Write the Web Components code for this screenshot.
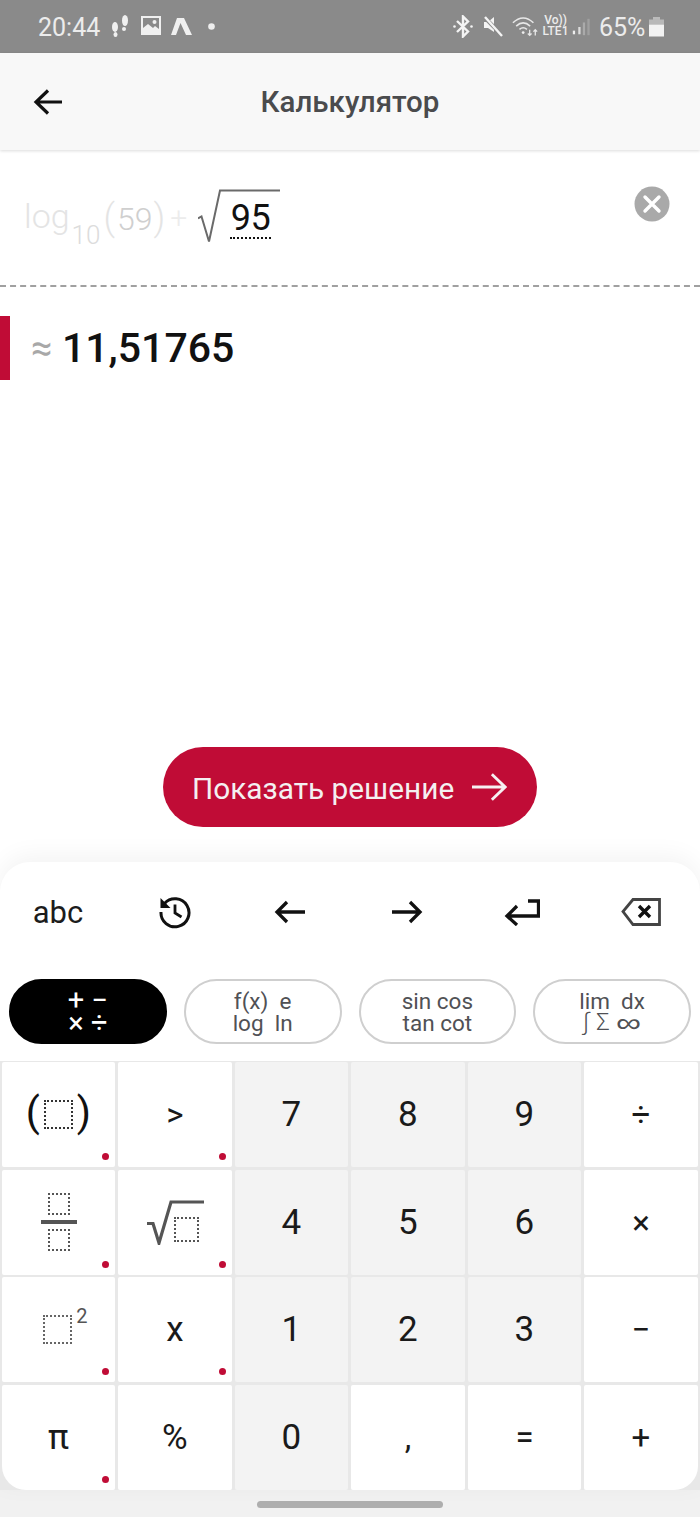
<!DOCTYPE html>
<html lang="ru"><head><meta charset="utf-8"><title>Калькулятор</title>
<style>
html,body{margin:0;padding:0;height:100%}
body{width:700px;height:1517px;overflow:hidden;display:flex;flex-direction:column;font-family:Roboto,"Liberation Sans",sans-serif;background:#fff;color:#111}
</style></head><body>

<status-bar></status-bar>
<app-header>Калькулятор</app-header>
<math-input></math-input>
<result-row>11,51765</result-row>
<solve-button>Показать решение</solve-button>
<math-keyboard>
  <tool-row slot="tools"></tool-row>
  <chip-row slot="chips">
    <calc-chip active><span>+ −</span><span>× ÷</span></calc-chip>
    <calc-chip><span>f(x)&nbsp; e</span><span>log&nbsp; ln</span></calc-chip>
    <calc-chip><span>sin cos</span><span>tan cot</span></calc-chip>
    <calc-chip><span>lim&nbsp; dx</span><span style="font-size:24px;line-height:21px;display:flex;align-items:center;gap:7px;height:21px"><span style="font-weight:300">∫</span><span style="font-weight:300">Σ</span><span style="font-family:'DejaVu Sans',sans-serif;font-size:27px;font-weight:200;margin:0 3px 0 2px;display:inline-block;transform:scaleX(1.3)">∞</span></span></calc-chip>
  </chip-row>
  <key-grid slot="keys">
    <calc-key dot><span style="display:inline-flex;align-items:center;gap:4px;font-size:41px;font-weight:400;color:#111"><span style="position:relative;top:-2px">(</span><dotted-box size="29" c="#333"></dotted-box><span style="position:relative;top:-2px">)</span></span></calc-key>
    <calc-key dot small>&gt;</calc-key>
    <calc-key tint>7</calc-key><calc-key tint>8</calc-key><calc-key tint>9</calc-key>
    <calc-key small>÷</calc-key>

    <calc-key dot><span style="display:inline-flex;flex-direction:column;align-items:center;gap:5px;margin-left:1px"><dotted-box size="22" c="#555"></dotted-box><span style="width:36px;height:3.500px;background:#555"></span><dotted-box size="22" c="#555"></dotted-box></span></calc-key>
    <calc-key dot><span style="display:inline-flex;align-items:flex-end;margin-right:5px"><svg width="58" height="46" viewBox="0 0 58 46" style="margin-right:-30px"><path d="M1 24.500H7L13 44L25 3H58" fill="none" stroke="#555" stroke-width="3.200"/></svg><dotted-box size="25" c="#555" style="margin-bottom:3px"></dotted-box></span></calc-key>
    <calc-key tint>4</calc-key><calc-key tint>5</calc-key><calc-key tint>6</calc-key>
    <calc-key small>×</calc-key>

    <calc-key dot><span style="display:inline-flex;align-items:flex-start;padding-left:14px"><dotted-box size="29" c="#666"></dotted-box><span style="font-size:20px;color:#555;font-weight:400;margin-left:4px;line-height:20px;margin-top:-9px">2</span></span></calc-key>
    <calc-key dot>x</calc-key>
    <calc-key tint>1</calc-key><calc-key tint>2</calc-key><calc-key tint>3</calc-key>
    <calc-key small>−</calc-key>

    <calc-key dot corner="bl">π</calc-key>
    <calc-key>%</calc-key>
    <calc-key tint>0</calc-key>
    <calc-key small>,</calc-key>
    <calc-key small>=</calc-key>
    <calc-key small corner="br">+</calc-key>
  </key-grid>
</math-keyboard>
<nav-bar></nav-bar>

<script>
function def(name, css, html, extra){
  customElements.define(name, class extends HTMLElement{
    constructor(){super();const r=this.attachShadow({mode:'open'});r.innerHTML='<style>'+css+'</style>'+html;}
    connectedCallback(){extra&&extra(this)}
  });
}

def('status-bar',`
:host{display:flex;flex:none;height:53px;box-sizing:border-box;background:#8a8a8a;align-items:center;padding:2px 36px 0 38px;color:#ececec;font:400 25px Roboto,sans-serif}
.l,.r{display:flex;align-items:center}
.l{flex:1}
svg{display:block;flex:none}
.v{display:flex;flex-direction:column;align-items:center;font-size:12px;line-height:11px;font-weight:500;margin-left:3px;width:27px}
`,`
<div class="l"><span style="width:62px">20:44</span>
<svg width="19" height="24" viewBox="0 0 19 23" style="margin-left:10px;margin-top:-4px" fill="#f0f0f0"><ellipse cx="5" cy="12.500" rx="3" ry="5"/><ellipse cx="5.500" cy="20" rx="2" ry="2.500"/><ellipse cx="15" cy="6" rx="3" ry="5.500"/><ellipse cx="14" cy="14.500" rx="2" ry="2"/></svg>
<svg width="20" height="20" viewBox="0 0 20 20" style="margin-left:12px;margin-top:-3px"><path fill="#f0f0f0" fill-rule="evenodd" d="M0 0h20v19H0zM2 2v10l5-4 5 4 2-2 4 3V2z"/><circle cx="13.500" cy="6" r="2" fill="#f0f0f0"/></svg>
<svg width="21" height="18" viewBox="0 0 21 18" style="margin-left:10px;margin-top:-2px" fill="#f0f0f0"><path d="M6 0h7l8 17h-6L9.500 5 5 17H0z"/></svg>
<svg width="7" height="7" viewBox="0 0 7 7" style="margin-left:16px;margin-top:-3px"><circle cx="3.500" cy="3.500" r="3.300" fill="#eee"/></svg>
</div>
<div class="r">
<svg width="20" height="23" viewBox="0 0 20 23" fill="none" stroke="#f4f4f4" stroke-width="2.400" style="margin-top:-2px"><path d="M4 6l11 10.500-5 5V1.500l5 5L4 17"/><circle cx="1.500" cy="11.500" r="1.300" fill="#f4f4f4" stroke="none"/><circle cx="18.500" cy="11.500" r="1.300" fill="#f4f4f4" stroke="none"/></svg>
<svg width="21" height="21" viewBox="0 0 21 21" style="margin-left:10px;margin-top:-2px"><path fill="#f4f4f4" d="M1 6h4l6-5v15l-6-4H1z"/><path d="M1 1l19 19" stroke="#8a8a8a" stroke-width="4"/><path d="M2 1l17 19" stroke="#f4f4f4" stroke-width="2.400"/></svg>
<svg width="27" height="22" viewBox="0 0 29 22" fill="none" stroke="#e8e8e8" stroke-width="1.700" style="margin-left:8px;margin-top:-2px"><path d="M1 6.500c7-7 15-7 22 0"/><path d="M4.500 10c5-4.500 10-4.500 15 0"/><path d="M8 13.500c3-2.500 5-2.500 8 0"/><circle cx="12" cy="17" r="1.500" fill="#eee" stroke="none"/><path d="M19 14v6M17 18l2 2 2-2M25 20v-6M23 16l2-2 2 2" stroke-width="1.400"/></svg>
<div class="v" style="margin-top:-3px"><span>Vo))</span><span>LTE1</span></div>
<svg width="20" height="20" viewBox="0 0 22 20" style="margin-left:2px;margin-top:-1px"><rect x="2" y="14" width="2.500" height="4" fill="#eee"/><rect x="8" y="10" width="2.500" height="8" fill="#ddd"/><rect x="13" y="5" width="2.500" height="14" fill="#aaa"/><rect x="18" y="1" width="2.500" height="18" fill="#a0a0a0"/></svg>
<span style="margin-left:8px;width:50px">65%</span>
<svg width="15" height="20" viewBox="0 0 15 20" style="margin-top:-2px"><rect x="4" y="0" width="7" height="3" fill="#bbb"/><rect x="0" y="2.500" width="15" height="5" fill="#b8b8b8"/><rect x="0" y="7.500" width="15" height="12" fill="#f2f2f2"/></svg>
</div>`);

def('app-header',`
:host{display:flex;flex:none;height:97px;background:#f8f8f8;align-items:center;position:relative;z-index:2;box-shadow:0 1px 3px rgba(0,0,0,.14)}
.b{flex:none;width:96px;padding-left:33px;box-sizing:border-box;display:flex}
.t{position:absolute;left:0;right:0;text-align:center;font:500 29.500px Roboto,sans-serif;color:#4a4b4d;top:31px;line-height:36px}
`,`<div class="b"><svg width="30" height="28" viewBox="0 0 30 28" fill="none" stroke="#111" stroke-width="3.200"><path d="M29 14H3M15 2.500L3 14l12 11.500"/></svg></div><div class="t"><slot></slot></div>`);

def('math-input',`
:host{display:flex;flex:none;height:137px;box-sizing:border-box;border-bottom:2px dashed #a0a0a0;position:relative;padding:31px 0 0 24px;font:300 34px Roboto,sans-serif;color:#e4e4e4}
.e{display:flex;align-items:flex-start;height:70px}
.g{line-height:46px;margin-top:11.500px}
sub{font-size:26px;line-height:0;position:relative;top:16px;vertical-align:baseline;color:#dcdcdc;margin-left:2px}
.p{font-size:36px;font-weight:300;color:#e4e4e4;line-height:46px;margin-top:14px}
.p.o{margin-left:3px}
.n{color:#cfcfcf;line-height:46px;font-size:32px;margin:15px 1px 0 2px}
.plus{color:#ececec;line-height:46px;font-size:30px;margin:14px 11px 0 5px}
.v{color:#111;font-size:36px;font-weight:400;position:relative;width:84px;height:64px;flex:none}
.v svg{position:absolute;left:0;top:0}
.d{position:absolute;left:32px;top:20px;width:41px;height:36px;border-bottom:2px dotted #111;text-align:center;line-height:35px;letter-spacing:-.3px}
.x{position:absolute;right:30px;top:36px;display:block}
`,`<div class="e"><span class="g">log<sub>10</sub></span><span class="p o">(</span><span class="n">59</span><span class="p">)</span><span class="plus">+</span>
<span class="v"><svg width="84" height="64" viewBox="0 0 84 64" fill="none"><path d="M0 37.500L3.500 35.500L11 60.500L22 9.500H82" stroke="#6a6a6a" stroke-width="2"/></svg><span class="d">95</span></span></div>
<svg class="x" width="36" height="36" viewBox="0 0 36 36"><circle cx="18" cy="18" r="17.500" fill="#a9a9a9"/><path d="M11 11l14 14M25 11L11 25" stroke="#fff" stroke-width="3.400" stroke-linecap="round"/></svg>`);

def('result-row',`
:host{display:flex;flex:none;height:64px;margin-top:29px;align-items:center;font:500 41px Roboto,sans-serif;color:#111}
.bar{width:10px;height:64px;background:#c00c36;flex:none}
.a{color:#a8a8a8;font-size:38px;font-weight:400;width:52px;box-sizing:border-box;padding-left:21px;flex:none;white-space:nowrap}
`,`<span class="bar"></span><span class="a">≈</span><span class="t"><slot></slot></span>`);

def('solve-button',`
:host{display:flex;flex:none;margin-top:auto;margin-bottom:35px;align-self:center;width:374px;height:80px;box-sizing:border-box;border-radius:40px;background:#c00c36;color:#f4f0f1;align-items:center;padding:3px 0 0 29px;font:400 29.800px Roboto,sans-serif}
svg{margin-left:18px;margin-top:-3px;flex:none}
`,`<slot></slot><svg width="35" height="32" viewBox="0 0 37 32" fill="none" stroke="#f6f0f2" stroke-width="3"><path d="M0 16H34M21 2.500L35 16L21 29.500"/></svg>`);

def('math-keyboard',`
:host{display:flex;flex-direction:column;flex:none;height:628px;box-sizing:border-box;background:#fff;border-radius:30px 30px 0 0;box-shadow:0 -6px 24px rgba(0,0,0,.05);position:relative;z-index:1}
`,`<slot name="tools"></slot><slot name="chips"></slot><slot name="keys"></slot>`);

def('tool-row',`
:host{display:grid;grid-template-columns:repeat(6,1fr);height:100px;padding:0 2.300px 0 1.700px;column-gap:3px;flex:none}
div{display:flex;align-items:center;justify-content:center;font:400 31px Roboto,sans-serif;color:#1c1c1c}
`,`<div><span style="margin-right:1px">abc</span></div>
<div><svg width="34" height="34" viewBox="0 0 34 34" fill="none" stroke="#111" stroke-width="3"><path d="M6.500 8.500A14 14 0 1 1 3 17"/><path fill="#111" stroke="none" d="M2.500 3v10h10z"/><path d="M17 9.500V18l6.500 4" stroke-width="2.800"/></svg></div>
<div><svg width="32" height="24" viewBox="0 0 32 24" fill="none" stroke="#111" stroke-width="3.300" style="margin-right:3px"><path d="M31 12H3M13 2L3 12l10 10"/></svg></div>
<div><svg width="32" height="24" viewBox="0 0 32 24" fill="none" stroke="#111" stroke-width="3.300" style="margin-right:1px"><path d="M1 12h28M19 2l10 10-10 10"/></svg></div>
<div><svg width="36" height="28" viewBox="0 0 36 28" fill="none" stroke="#111" stroke-width="3.300" style="margin-right:5px"><path d="M24 3h10.500v15H3M13 8L3 18l10 9"/></svg></div>
<div><svg width="40" height="28" viewBox="0 0 40 28" fill="none" stroke="#444" stroke-width="2.800"><path d="M38.500 1.500H12L2 13.500l10 13h26.500z"/><path d="M18 8l11 11M29 8L18 19" stroke="#111" stroke-width="3.400"/></svg></div>`);

def('chip-row',`
:host{display:grid;grid-template-columns:repeat(4,1fr);column-gap:17px;padding:17px 9px;flex:none}
`,`<slot></slot>`);

def('calc-chip',`
:host{display:flex;flex-direction:column;align-items:center;justify-content:center;height:65px;box-sizing:border-box;border-radius:33px;border:2px solid #cfcfcf;color:#505155;font:400 22.500px Roboto,sans-serif;line-height:22px}
:host([active]){background:#000;border-color:#000;color:#fff;font-size:29px;line-height:23px}
::slotted(span){display:block;white-space:pre}
`,`<slot></slot>`);

def('key-grid',`
:host{display:grid;grid-template-columns:repeat(6,1fr);grid-auto-rows:105px;row-gap:2.500px;column-gap:3px;padding:1px 2.300px 0 1.700px;background:#e8e8e8;flex:none;height:429px;box-sizing:border-box}
`,`<slot></slot>`);

def('calc-key',`
:host{display:flex;align-items:center;justify-content:center;position:relative;background:#fff;border-radius:2px;font:400 35px Roboto,sans-serif;color:#1a1a1a;line-height:1;min-width:0}
:host([tint]){background:#f3f3f3}
:host([small]){font-size:33px}
:host([corner=bl]){border-bottom-left-radius:24px}
:host([corner=br]){border-bottom-right-radius:24px}
:host([dot])::after{content:"";position:absolute;right:6px;bottom:7px;width:7px;height:7px;border-radius:50%;background:#c00c36}
`,`<slot></slot>`);

def('dotted-box',`
:host{display:block;box-sizing:border-box;flex:none;background:transparent}
`,``,el=>{
  const s=+el.getAttribute('size');const c=el.getAttribute('c');
  el.style.width=s+'px';el.style.height=s+'px';
  el.style.border='2px dotted '+c;
});

def('nav-bar',`
:host{display:flex;flex:none;height:27px;background:#f1f1f1;align-items:flex-start;justify-content:center;padding-top:11px;box-sizing:border-box}
i{display:block;width:186px;height:7px;border-radius:4px;background:#aeaeae}
`,`<i></i>`);
</script>
</body></html>
